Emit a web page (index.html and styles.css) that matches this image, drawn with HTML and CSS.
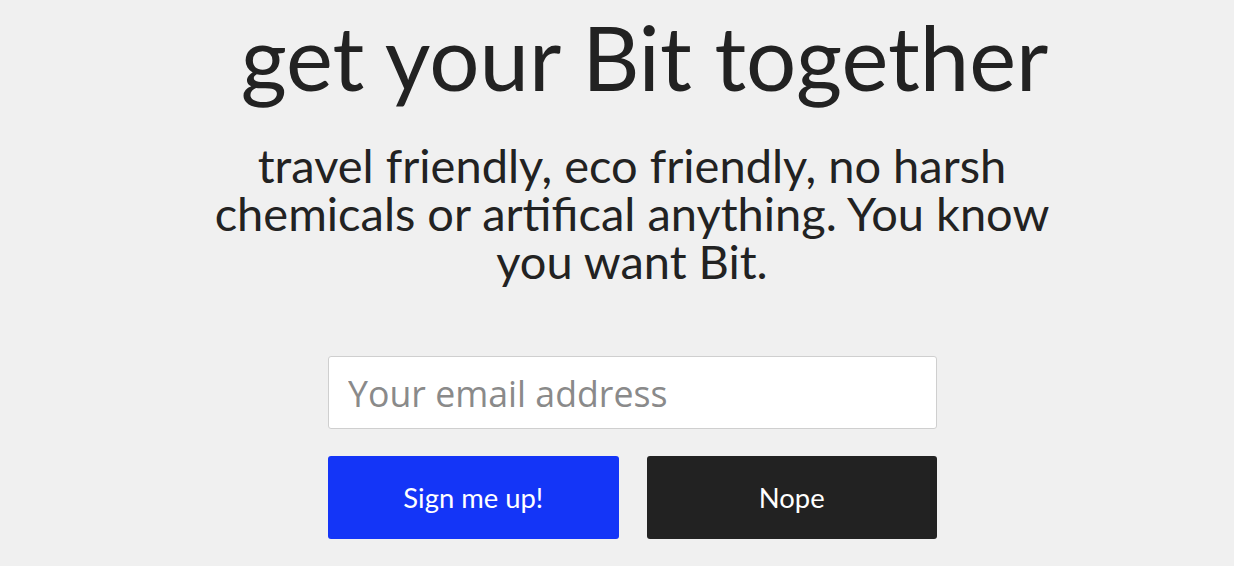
FILE: index.html
```html
<!DOCTYPE html>
<html>
<head>
<meta charset="utf-8">
<link rel="stylesheet" href="styles.css">
</head>
<body>
<main class="hero">
  <h1 class="title">get your Bit together</h1>
  <p class="lead">travel friendly, eco friendly, no harsh chemicals or artifical anything. You know you want Bit.</p>
  <form class="signup">
    <input class="email" type="email" placeholder="Your email address">
    <div class="actions">
      <button type="button" class="btn btn-primary">Sign me up!</button>
      <button type="button" class="btn btn-dark">Nope</button>
    </div>
  </form>
</main>
</body>
</html>
```
FILE: styles.css
```css
html, body {
  margin: 0;
  padding: 0;
  background: #f0f0f0;
}
body {
  font-family: Lato, "Open Sans", sans-serif;
  color: #222;
  height: 566px;
  overflow: hidden;
}
.hero {
  width: 860px;
  margin-left: 202px;
  display: flex;
  flex-direction: column;
  align-items: center;
  text-align: center;
}
.title {
  font-size: 88.7px;
  font-weight: 400;
  line-height: 90px;
  margin: 12px 0 0 25px;
  color: #222;
}
.lead {
  font-size: 47px;
  line-height: 48px;
  margin: 39px 0 0 0;
}
.signup {
  margin-top: 71px;
  display: flex;
  flex-direction: column;
  gap: 27px;
  width: 609px;
  margin-left: 1px;
}
.email {
  box-sizing: border-box;
  height: 73px;
  width: 100%;
  border: 1px solid #cfcfcf;
  border-radius: 3px;
  background: #fff;
  padding: 0 19px;
  font-family: "Open Sans", sans-serif;
  font-size: 35.7px;
  color: #222;
}
.email::placeholder {
  color: #8a8a8a;
}
.actions {
  display: flex;
  gap: 28px;
}
.btn {
  flex: 1;
  height: 83px;
  border: 0;
  border-radius: 3px;
  font-family: Lato, sans-serif;
  font-size: 27.4px;
  color: #fff;
}
.btn-primary { background: #1435f7; }
.btn-dark { background: #222; }
```
